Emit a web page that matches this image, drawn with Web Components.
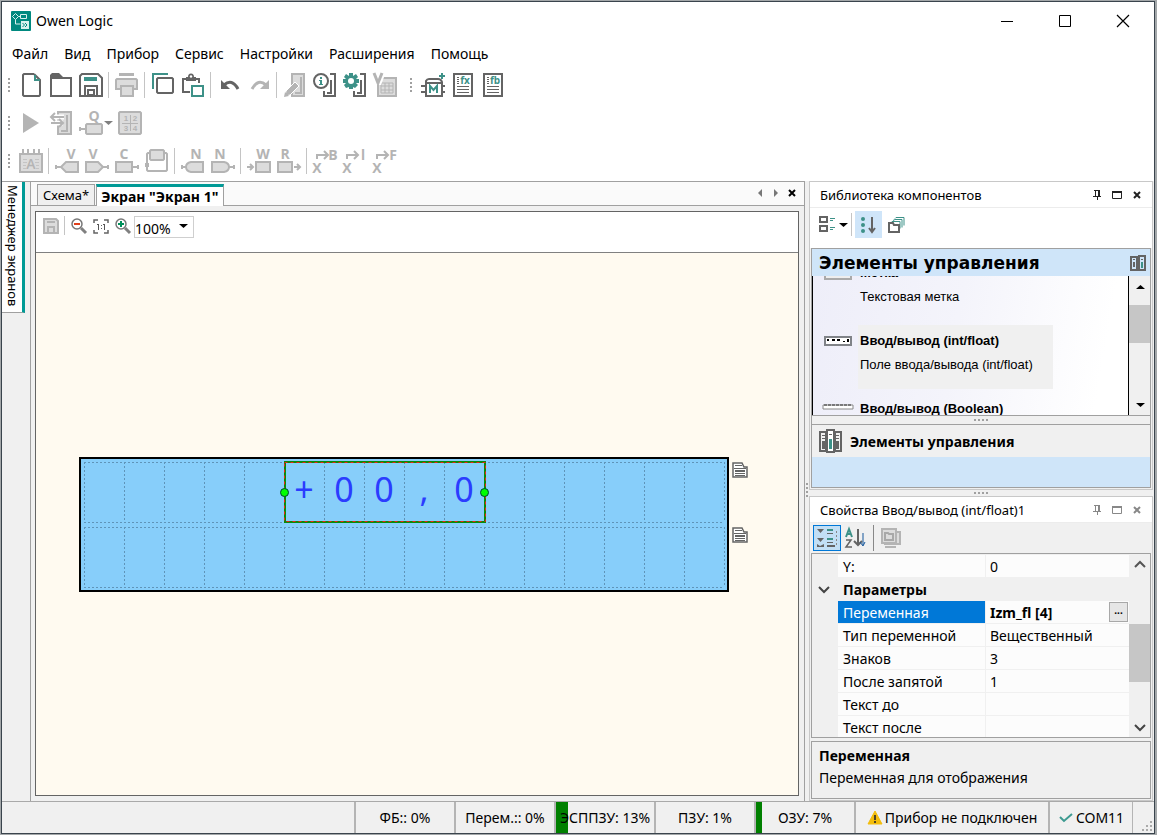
<!DOCTYPE html>
<html lang="ru">
<head>
<meta charset="utf-8">
<title>Owen Logic</title>
<style>
html,body{height:100%;margin:0}
body{background:#a3a7a9;font-family:"Noto Sans","Open Sans",sans-serif;font-size:14px;color:#000;overflow:hidden}
</style>
</head>
<body>
<ol-app></ol-app>
<script>
const ICONS = {
  logo:`<rect width="20" height="20" rx="1" fill="#00897f"/><g fill="none" stroke="#d9f0ee" stroke-width="1"><path d="M1.5 5.5l3-3 3 3-3 3zM7.5 5.5h2M9.5 3.5h6v4h-6zM4.5 8.500v4.500h5"/></g><rect x="10" y="10" width="8" height="8" fill="#d9f0ee"/><path d="M11.500 12l2 2-2 2M14 12l2 2-2 2" fill="none" stroke="#00897f"/>`,
  new:`<path class="d" d="M15 1H5L4 2v20l1 1h15l1-1V7L15 1"/><path class="t" d="M16 2v5h5"/>`,
  open:`<path class="D" d="M1 5V2l2-2h7l4 4v1z"/><path class="d" d="M2 5h20v18H2z"/>`,
  save:`<path class="d" d="M1 3l2-2h16l4 4v18H1z"/><path class="T" d="M5 4h13v4H5z"/><path class="d" d="M6 23V13h12v10M9 22v-5h6v5z"/>`,
  print:`<path class="G" d="M4 0h15v3H4z"/><path class="g" d="M1 16V7l1-1h19l1 1v9z"/><path class="g" d="M6 13h12v10H6z"/>`,
  copy:`<path class="t" d="M2 16V1h15"/><path class="d" d="M7 5h14l1 1v13l-1 1H7l-1-1V6z"/>`,
  paste:`<path class="d" d="M9 19H2V6h16v4"/><path class="D" d="M5 4h2a3 3.500 0 016 0h2v4H5z"/><circle cx="10" cy="3.500" r="1.200" fill="#fff"/><path class="t" d="M11 13h11v10H11z"/>`,
  undo:`<path d="M7 12Q15 5 21 16" fill="none" stroke="#646464" stroke-width="3"/><path class="D" d="M4 7v9h9z"/>`,
  redo:`<path d="M19 12Q11 5 5 16" fill="none" stroke="#b4b4b4" stroke-width="3"/><path class="G" d="M22 7v9h-9z"/>`,
  edit:`<path class="g" d="M9 1h12v22H9z"/><path class="gl" d="M12 20h6V4"/><path d="M2 23l1-5 9-9 4 4-9 9z" fill="#b4b4b4" stroke="#fff"/><path class="G" d="M1 24l1-5 4 4z"/>`,
  info:`<path class="d" d="M17 1h5v22H11v-5M14 20h4V7"/><circle cx="8" cy="8" r="7" fill="#fff" stroke="#646464" stroke-width="2"/><path class="T" d="M7 4h2v2H7zM6 7h3v4h1v1H6v-1h1V8H6z"/>`,
  gear:`<path class="d" d="M17 1h5v22H11v-5M14 20h4V7"/><circle cx="8" cy="8" r="9" fill="#fff"/><path class="T" d="M6 0h4v3l3-2 2 3-2 2h3v4h-3l2 2-3 3-2-1v2H6v-2l-3 1-2-3 2-2H0V6h3L1 4l2-3 3 2z"/><circle cx="8" cy="8" r="3" fill="#fff"/>`,
  vgrid:`<path class="g" d="M5 5h18v18H5z"/><path d="M8 10h12v10H8zM8 13h12M8 17h12M12 10v10M16 10v10" fill="none" stroke="#b4b4b4" stroke-width="1"/><path d="M-1-1h14L8 12H4z" fill="#fff"/><path d="M1 0l4 10L9 0" fill="none" stroke="#b4b4b4" stroke-width="3"/>`,
  macro:`<path class="d" d="M5 11V8q1-2 3-2h9q3 0 4 3v14H5zM5 10h16M0 13h4M0 19h4M21 13h3M21 19h3"/><path class="t" d="M9 20v-7l3.500 4 3.500-4v7M18 3h6M21 0v6"/>`,
  fx:`<path class="d" d="M3 1h18v22H3z"/><path class="d" style="stroke-width:1" d="M6 4.500h2M6 6.500h2M6 8.500h2M6 10.500h2M6 13.500h12M6 16.500h12M6 19.500h12"/><text class="tt" x="14" y="11">fx</text>`,
  fb:`<path class="d" d="M3 1h18v22H3z"/><path class="d" style="stroke-width:1" d="M6 4.500h2M6 6.500h2M6 8.500h2M6 10.500h2M6 13.500h12M6 16.500h12M6 19.500h12"/><text class="tt" x="14" y="11">fb</text>`,
  play:`<path class="G" d="M4 2v20l16-10z"/>`,
  transfer:`<path class="g" d="M9 1h13v22H9z"/><path class="gl" d="M12 20h6V4"/><path d="M4 6h11M3 12h11" stroke="#fff" stroke-width="5"/><path class="gl" d="M3 6h12M6 2L2 6l4 4M2 12h12M10 8l4 4-4 4"/>`,
  q:`<text class="gt" x="15" y="10">Q</text><path class="g" d="M7 14l1-1h14l1 1v8l-1 1H8l-1-1z"/><path class="gl" d="M0 18h6"/><path class="G" d="M0 16h2v4H0z"/>`,
  nums:`<path class="g" d="M2 1h20l1 1v20l-1 1H2l-1-1V2z"/><path d="M4 12.500h16M12.500 4v16" stroke="#b4b4b4" stroke-width="1"/><g class="nt"><text x="8" y="10">1</text><text x="17" y="10">2</text><text x="8" y="20">3</text><text x="17" y="20">4</text></g>`,
  cal:`<path class="g" d="M1 5h22v18H1z"/><path class="gl" d="M4 0v6M9 0v6M15 0v6M20 0v6"/><path d="M4 10.500h4M4 13.500h4M4 16.500h3M4 19.500h3M16 10.500h4M16 13.500h4M17 16.500h3M17 19.500h3" stroke="#c4c4c4"/><text class="gt" x="12" y="20" style="font-weight:600">A</text>`,
  vl:`<text class="gt" x="16" y="10">V</text><path class="g" d="M23 13v10H11l-5-5 5-5z"/><path class="gl" d="M0 18h6"/><path class="G" d="M0 16h2v4H0z"/>`,
  vr:`<text class="gt" x="8" y="10">V</text><path class="g" d="M1 13v10h12l5-5-5-5z"/><path class="gl" d="M18 18h6"/><path class="G" d="M22 16h2v4h-2z"/>`,
  c:`<text class="gt" x="9" y="10">C</text><path class="g" d="M1 13h16v10H1z"/><path class="gl" d="M18 18h6"/><path class="G" d="M22 16h2v4h-2z"/>`,
  loop:`<path class="gl" d="M5 4H3L2 5v16l1 1h18l1-1V5l-1-1h-2"/><path class="g" d="M6 1h12l1 1v8l-1 1H6l-1-1V2z"/><path class="G" d="M0 14h4v4H0z"/>`,
  nl:`<text class="gt" x="15" y="10">N</text><path class="g" d="M22 13v10H10q-5-1-5-5t5-5z"/><path class="gl" d="M0 18h5"/><path class="G" d="M0 16h2v4H0z"/>`,
  nr:`<text class="gt" x="9" y="10">N</text><path class="g" d="M1 13v10h12q5-1 5-5t-5-5z"/><path class="gl" d="M18 18h6"/><path class="G" d="M22 16h2v4h-2z"/>`,
  w:`<text class="gt" x="16" y="10">W</text><path class="g" d="M9 13h14v10H9z"/><path class="gl" d="M0 18h6M3 15l3 3-3 3"/>`,
  r:`<text class="gt" x="8" y="10">R</text><path class="g" d="M1 13h14v10H1z"/><path class="gl" d="M17 18h6M20 15l3 3-3 3"/>`,
  xb:`<path class="gl" d="M4 10V6h11M11 2l4 4-4 4"/><text class="gt" x="4" y="24">X</text><text class="gt" x="20" y="11">B</text>`,
  xi:`<path class="gl" d="M4 10V6h11M11 2l4 4-4 4"/><text class="gt" x="4" y="24">X</text><text class="gt" x="20" y="11" style="font-family:Roboto">I</text>`,
  xf:`<path class="gl" d="M4 10V6h11M11 2l4 4-4 4"/><text class="gt" x="4" y="24">X</text><text class="gt" x="20" y="11">F</text>`,
  saveS:`<path class="g" d="M1 1h12l2 2v12H1z"/><path class="G" d="M4 3h8v2H4z"/><path class="gl" d="M5 15V9h6v6"/>`,
  zoomOut:`<path d="M10 10l5 5" stroke="#808080" stroke-width="3"/><circle cx="6" cy="6" r="5" fill="#fff" stroke="#777" stroke-width="1.500"/><path d="M3 6h6" stroke="#e0401c" stroke-width="2"/>`,
  zoomIn:`<path d="M10 10l5 5" stroke="#808080" stroke-width="3"/><circle cx="6" cy="6" r="5" fill="#fff" stroke="#777" stroke-width="1.500"/><path d="M3 6h6M6 3v6" stroke="#00905a" stroke-width="2"/>`,
  oneone:`<path class="d" style="stroke-width:1.500" d="M1 5V2h4M11 2h4v3M15 12v3h-4M5 15H1v-3"/><path d="M5.500 6v6M4 6.500h1M11.500 6v6M10 6.500h1" stroke="#555" fill="none"/><path class="D" d="M8 7h1v1H8zM8 10h1v1H8z"/>`,
  left:`<path d="M10 4v8L6 8z" fill="#777"/>`,
  right:`<path d="M6 4v8l4-4z" fill="#777"/>`,
  close:`<path d="M5 5l6 6M11 5l-6 6" stroke="currentColor" stroke-width="2"/>`,
  pin:`<path d="M5 3.500h6M6.500 4v5M10.500 4v5M9.500 4v5M4 9.500h8M8.500 9v4" fill="none" stroke="currentColor"/>`,
  win:`<path d="M3.500 4.500h9v7h-9z" fill="none" stroke="currentColor"/><path d="M3 5h10" stroke="currentColor" stroke-width="2"/>`,
  down:`<path d="M4 6h9l-4.500 4z"/>`,
  up:`<path d="M4 10h9L8.500 6z"/>`,
  chevDown:`<path d="M3 6l5 5 5-5" fill="none" stroke="#444" stroke-width="2"/>`,
  chevUp:`<path d="M3 10l5-5 5 5" fill="none" stroke="#555" stroke-width="2"/>`,
  tiles:`<path class="d" d="M1 1h7v5H1zM1 10h7v5H1z"/><path class="t" style="stroke-width:1" d="M11 2.500h5M11 4.500h3M11 11.500h5M11 13.500h3"/>`,
  sort:`<circle class="T" cx="2" cy="2" r="2"/><circle class="T" cx="2" cy="8" r="2"/><circle class="T" cx="2" cy="14" r="2"/><path class="d" d="M11 0v15M8 11l3 4 3-4"/>`,
  folders:`<path d="M5 3.500l2-1h7v8M7 1.500l1-1h8v8M3 5.500l1-1h8v7" fill="none" stroke="#3d9188"/><path class="d" d="M1 6h4l1 2h5v7H1z"/>`,
  books2:`<path class="d" d="M1 2h6v13H1zM9 1h6v14H9z"/><path class="D" d="M3 4h2v1H3zM3 7h2v5H3zM11 4h2v1h-2z"/><path class="T" d="M11 7h2v6h-2z"/>`,
  books3:`<path d="M1 3h6v19H1zM16 3h6v19h-6z" class="d" /><path d="M8 1h7v22H8z" fill="#fff" stroke="#646464" stroke-width="2"/><path class="D" d="M3 6h3v1H3zM3 9h3v1H3zM3 12h3v8H3zM17 6h3v1h-3zM17 9h3v1h-3zM17 12h3v8h-3zM10 5h3v1h-3z"/><path class="T" d="M10 10h3v10h-3z"/>`,
  field:`<path d="M1 1h26v8H1z" fill="#fff" stroke="#808388" stroke-width="2"/><path d="M3 3h2v2H3zM8 3h3v2H8zM13 3h3v2h-3zM19 5h2v1h-2zM23 3h2v3h-2z"/>`,
  bar:`<path d="M0 1h30v4H0z" fill="#fff" stroke="#888" stroke-width="1"/><path d="M1 1h28" stroke="#333" stroke-dasharray="3 1"/>`,
  label:`<path d="M1 1h26v10H1z" fill="#eee" stroke="#aaa" stroke-width="2"/>`,
  cats:`<path class="D" d="M1 1h7L4.500 5zM1 10h7l-3.500 4zM1 19V16l3 2 4-2v3zM11 17h8v2h-8z"/><path class="t" d="M11 2h6M11 11h6"/><path class="d" style="stroke-width:1" d="M11 5.500h6M11 14.500h6"/><path d="M20.500 3v16" stroke="#888" stroke-dasharray="2 2"/>`,
  az:`<path class="t" d="M1 9l3-8 3 8M2 6h4"/><path class="d" style="stroke-width:1.500" d="M1 12h5l-5 7h6"/><path class="d" d="M13 1v16M9 13l4 4 4-4"/><path d="M18 5v12M15 14l3 4 2-4" fill="none" stroke="#15569b"/>`,
  pages:`<path class="g" d="M4 4h15v12H4z"/><path d="M4 19h11" class="gl"/><path class="g" d="M1 1h14v14H1z"/><path d="M4 5h3l1 1h4v6H4z" fill="none" stroke="#a8a8a8" stroke-width="2"/>`,
  doc:`<path d="M2 1h8l2 4h3v10H1V1z" fill="#fff" stroke="#646464" stroke-width="1.500"/><path d="M3 3.500h7M2 6.500h12M3 11.500h10M3 13.500h10" stroke="#646464"/><path d="M3 9h10" stroke="#646464" stroke-width="2"/>`,
  warn:`<path d="M8 1l7 13H1z" fill="#f3bd0b" stroke="#f3bd0b" stroke-linejoin="round"/><path d="M7 5h2v5H7zM7 11h2v2H7z" fill="#4d4327"/>`,
  check:`<path d="M2 7l4 4 8-7" fill="none" stroke="#3d9a90" stroke-width="2"/>`,
  size:`<g fill="#aaa"><path d="M8 0h2v2H8zM4 4h2v2H4zM8 4h2v2H8zM0 8h2v2H0zM4 8h2v2H4zM8 8h2v2H8z"/></g>`,
  wmin:`<path d="M2 8.500h12" stroke="#000"/>`,
  wmax:`<path d="M2.500 2.500h11v11h-11z" fill="none" stroke="#000"/>`,
  wclose:`<path d="M2 2l12 12M14 2L2 14" stroke="#000" stroke-width="1.200"/>`
};

const define = (name, html, ready) => {
  const t = document.createElement('template');
  t.innerHTML = html;
  customElements.define(name, class extends HTMLElement {
    constructor(){ super(); this.attachShadow({mode:'open'}); }
    connectedCallback(){
      if (this.shadowRoot.childNodes.length) return;
      this.shadowRoot.append(t.content.cloneNode(true));
      if (ready) ready(this, this.shadowRoot);
    }
  });
};

/* <ol-icon name w h> : inline vector icon */
define('ol-icon', `<style>
:host{display:inline-flex;flex:none}
svg{display:block;overflow:visible}
.d{fill:none;stroke:#646464;stroke-width:2}.D{fill:#646464}
.t{fill:none;stroke:#3d9188;stroke-width:2}.T{fill:#3d9188}
.g{fill:#dcdcdc;stroke:#b4b4b4;stroke-width:2}.gl{fill:none;stroke:#b4b4b4;stroke-width:2}.G{fill:#b4b4b4}
text{text-anchor:middle;font-family:"Open Sans","Noto Sans",sans-serif;font-weight:700}
.gt{fill:#b4b4b4;font-size:14px}.nt text{fill:#b4b4b4;font-size:8px;font-family:"Liberation Sans",sans-serif}.tt{fill:#3d9188;font-size:10px}
</style>`, (el, root) => {
  const w = el.getAttribute('w') || 16, h = el.getAttribute('h') || w;
  root.innerHTML += `<svg width="${w}" height="${h}" viewBox="0 0 ${w} ${h}" aria-hidden="true">${ICONS[el.getAttribute('name')]}</svg>`;
});

/* <ol-tool icon label> : flat toolbar button */
define('ol-tool', `<style>
:host{display:flex;flex:none;width:var(--tool,30px)}
button{all:unset;box-sizing:border-box;display:flex;align-items:center;justify-content:center;width:100%;height:var(--tool,30px)}
</style><button></button>`, (el, root) => {
  const b = root.querySelector('button');
  b.setAttribute('aria-label', el.getAttribute('label'));
  const s = el.getAttribute('size') || 24;
  b.innerHTML = `<ol-icon name="${el.getAttribute('icon')}" w="${s}" h="${el.getAttribute('h') || s}"></ol-icon>`;
});

define('ol-sep', `<style>:host{display:block;flex:none;width:1px;height:26px;margin:0 3px 0 2px;background:#c4c4c4}</style>`);
define('ol-grip', `<style>:host{display:block;flex:none;width:2px;height:14px;background:repeating-linear-gradient(#a0a0a0 0 2px,transparent 2px 4px)}
:host([dots]){width:15px;height:2px;background:repeating-linear-gradient(90deg,#a0a0a0 0 2px,transparent 2px 4px)}</style>`);

define('ol-titlebar', `<style>
:host{display:flex;align-items:center;height:37px;padding:0 2px 0 9px;background:#fff}
h1{flex:1;margin:0 0 0 5px;font-size:14px;font-weight:400}
.w{display:flex;--tool:58px}
ol-tool{height:30px;align-items:center}
</style><ol-icon name="logo" w="20"></ol-icon><h1>Owen Logic</h1>
<div class="w"><ol-tool icon="wmin" size="16" label="Свернуть"></ol-tool><ol-tool icon="wmax" size="16" label="Развернуть"></ol-tool><ol-tool icon="wclose" size="16" label="Закрыть"></ol-tool></div>`);

define('ol-menubar', `<style>
:host{display:block;height:27px;background:#fff}
nav{display:flex;gap:16px;padding:0 10px;line-height:30px}
button{all:unset;font-size:14px}
</style><nav><button>Файл</button><button>Вид</button><button>Прибор</button><button>Сервис</button><button>Настройки</button><button>Расширения</button><button>Помощь</button></nav>`);

define('ol-toolbars', `<style>
:host{display:block;background:#fff}
div{display:flex;align-items:center;height:38px;padding-left:6px}
ol-grip{margin-right:6px}
.mid{margin-left:10px}
.q{display:flex;align-items:center;width:39px}
.q ol-icon{margin-left:-6px}
</style>
<div><ol-grip></ol-grip><ol-tool icon="new" label="Новый"></ol-tool><ol-tool icon="open" label="Открыть"></ol-tool><ol-tool icon="save" label="Сохранить"></ol-tool><ol-sep></ol-sep><ol-tool icon="print" label="Печать"></ol-tool><ol-sep></ol-sep><ol-tool icon="copy" label="Копировать"></ol-tool><ol-tool icon="paste" label="Вставить"></ol-tool><ol-sep></ol-sep><ol-tool icon="undo" label="Отменить"></ol-tool><ol-tool icon="redo" label="Повторить"></ol-tool><ol-sep></ol-sep><ol-tool icon="edit" label="Записать"></ol-tool><ol-tool icon="info" label="Информация"></ol-tool><ol-tool icon="gear" label="Настройки прибора"></ol-tool><ol-tool icon="vgrid" label="Таблица переменных"></ol-tool><ol-grip class="mid"></ol-grip><ol-tool icon="macro" label="Макрос"></ol-tool><ol-tool icon="fx" label="Функции"></ol-tool><ol-tool icon="fb" label="Блоки"></ol-tool></div>
<div><ol-grip></ol-grip><ol-tool icon="play" label="Пуск"></ol-tool><ol-tool icon="transfer" label="Передача"></ol-tool><span class="q"><ol-tool icon="q" label="Выход"></ol-tool><ol-icon name="down" style="fill:#808080"></ol-icon></span><ol-tool icon="nums" label="Числа"></ol-tool></div>
<div><ol-grip></ol-grip><ol-tool icon="cal" label="Календарь"></ol-tool><ol-sep></ol-sep><ol-tool icon="vl" label="Вход"></ol-tool><ol-tool icon="vr" label="Выход"></ol-tool><ol-tool icon="c" label="Константа"></ol-tool><ol-tool icon="loop" label="Задержка"></ol-tool><ol-sep></ol-sep><ol-tool icon="nl" label="Сетевой вход"></ol-tool><ol-tool icon="nr" label="Сетевой выход"></ol-tool><ol-sep></ol-sep><ol-tool icon="w" label="Запись"></ol-tool><ol-tool icon="r" label="Чтение"></ol-tool><ol-sep></ol-sep><ol-tool icon="xb" label="В Boolean"></ol-tool><ol-tool icon="xi" label="В integer"></ol-tool><ol-tool icon="xf" label="В float"></ol-tool></div>`);

define('ol-side-tab', `<style>
:host{display:block;background:#f0f0f0;border-top:1px solid #a0a0a0}
button{all:unset;box-sizing:border-box;display:block;writing-mode:vertical-rl;width:23px;height:131px;background:#fff;border-right:3px solid #009a96;border-bottom:1px solid #a0a0a0;font-size:13px;line-height:15px;padding-top:3px;white-space:nowrap}
</style><button><slot></slot></button>`);

/* LCD editing surface: 16 x 2 character cells */
define('ol-screen', `<style>
:host{display:flex;align-items:flex-start;gap:3px}
.lcd{position:relative;box-sizing:border-box;width:650px;height:135px;border:2px solid #000;background:#87cefa}
svg{display:block}
.sel{position:absolute;left:203px;top:2px;width:202px;height:62px;display:grid;grid-template-columns:repeat(5,40px);font-size:34px;line-height:56px;color:#2b3cff;text-align:center}
i{position:absolute;top:27px;width:7px;height:7px;border:1px solid #043;border-radius:50%;background:#0f0}
i.a{left:-4px}i.b{right:-3px}
.n{display:flex;flex-direction:column;gap:49px;padding-top:5px}
</style>
<div class="lcd"><svg width="646" height="131"></svg><div class="sel"><span>+</span><span>0</span><span>0</span><span>,</span><span>0</span><i class="a"></i><i class="b"></i></div></div>
<div class="n"><ol-icon name="doc"></ol-icon><ol-icon name="doc"></ol-icon></div>`, (el, root) => {
  let d = '';
  for (const y of [3, 68]) {
    d += `M3 ${y}.5h640M3 ${y + 60}.5h640`;
    for (let i = 0; i <= 16; i++) d += `M${3 + i * 40}.5 ${y}v60`;
  }
  root.querySelector('svg').innerHTML = `<path d="${d}" stroke="#5f94b8" stroke-dasharray="2 2" fill="none"/>
    <path d="M204 3h200v60h-200z" fill="none" stroke="#0a8a0a" stroke-width="2"/><path d="M203.5 3.5h201v59h-201z" fill="none" stroke="#f02010" stroke-width="1" stroke-dasharray="3 3"/>`;
});

define('ol-editor', `<style>
:host{display:flex;flex-direction:column;min-width:0;box-sizing:border-box;border:1px solid #a0a0a0;border-bottom:0;background:#f0f0f0}
.tabs{display:flex;align-items:flex-end;height:24px;padding:0 4px 0 6px;background:#fafafa;box-shadow:inset 0 -1px #a0a0a0}
.tabs button{all:unset;box-sizing:border-box;height:22px;border:1px solid #a0a0a0;padding:0 5px;font-size:13px;line-height:21px;background:#f0f0f0;white-space:nowrap;margin-right:1px}
.tabs button[aria-selected=true]{background:#fff;font-size:14px;font-weight:700;border-top:3px solid #009a96;border-bottom:0;line-height:14px;padding:0 5px 0 4px}
.nav{display:flex;align-items:center;margin-left:auto;height:22px;padding-bottom:2px;--tool:16px}
.frame{flex:1;display:flex;flex-direction:column;margin:5px 5px 5px 4px;border:1px solid #646464;background:#fffaf0;min-height:0}
.bar{display:flex;align-items:flex-start;height:41px;box-sizing:border-box;border-bottom:1px solid #808080;background:#fff;padding:3px 4px 0;--tool:22px}
.bar ol-sep{height:19px;margin:1px 3px 0 2px}
select{appearance:none;display:block;border:1px solid #cfcfcf;width:60px;height:22px;box-sizing:border-box;font:14px "Noto Sans",sans-serif;background:#fff;padding:2px 0 0;margin:0;color:#000}
.z{position:relative;margin-top:1px}
.z ol-icon{position:absolute;right:3px;top:2px;pointer-events:none}
.canvas{flex:1;display:flex;align-items:center;padding-left:43px;min-height:0}
</style>
<div class="tabs" role="tablist"><button role="tab">Схема*</button><button role="tab" aria-selected="true">Экран "Экран 1"</button>
<span class="nav"><ol-tool icon="left" size="16" label="Назад"></ol-tool><ol-tool icon="right" size="16" label="Вперёд"></ol-tool><ol-tool icon="close" size="16" label="Закрыть"></ol-tool></span></div>
<div class="frame"><div class="bar"><ol-tool icon="saveS" size="16" label="Сохранить"></ol-tool><ol-sep></ol-sep><ol-tool icon="zoomOut" size="16" label="Уменьшить"></ol-tool><ol-tool icon="oneone" size="16" label="Масштаб 1:1"></ol-tool><ol-tool icon="zoomIn" size="16" label="Увеличить"></ol-tool><span class="z"><select aria-label="Масштаб"><option>100%</option></select><ol-icon name="down"></ol-icon></span></div>
<div class="canvas"><ol-screen></ol-screen></div></div>`);

define('ol-panel', `<style>
:host{display:flex;flex-direction:column;box-sizing:border-box;border:1px solid #c8c8c8;background:#f0f0f0;color:#000}
header{display:flex;align-items:center;flex:none;height:25px;padding:0 5px 0 10px;background:#fff;border-bottom:1px solid #ececec;--tool:20px}
h2{flex:1;margin:0;font-size:13px;font-weight:400;white-space:nowrap}
.c{display:flex;color:#222}
:host([inactive]) .c{color:#888}
</style><header><h2></h2><span class="c"><ol-tool icon="pin" size="16" label="Закрепить"></ol-tool><ol-tool icon="win" size="16" label="Развернуть"></ol-tool><ol-tool icon="close" size="16" label="Закрыть"></ol-tool></span></header><slot></slot>`,
(el, root) => { root.querySelector('h2').textContent = el.getAttribute('heading'); });

define('ol-scroll', `<style>
:host{display:flex;flex-direction:column;align-items:center;flex:none;width:21px;background:#f0f0f0;box-sizing:border-box}
ol-tool{--tool:21px}
b{display:block;width:100%;background:#c6c6c6}
</style><ol-tool size="16" label="Вверх"></ol-tool><span></span><b></b><span style="flex:1"></span><ol-tool size="16" label="Вниз"></ol-tool>`,
(el, root) => {
  const [a, z] = root.querySelectorAll('ol-tool');
  const thin = el.hasAttribute('thin');
  a.shadowRoot.querySelector('button').innerHTML = `<ol-icon name="${thin ? 'chevUp' : 'up'}"></ol-icon>`;
  z.shadowRoot.querySelector('button').innerHTML = `<ol-icon name="${thin ? 'chevDown' : 'down'}"></ol-icon>`;
  root.querySelector('span').style.height = el.getAttribute('offset') + 'px';
  root.querySelector('b').style.height = el.getAttribute('thumb') + 'px';
});

define('ol-lib-item', `<style>
:host{display:flex;flex:none;height:64px;font-family:"Liberation Sans",Arial,sans-serif;font-size:13px}
.i{flex:none;width:45px;display:flex;justify-content:center;padding:11px 0 0 5px;box-sizing:border-box;height:30px}
.b{padding:8px 20px 0 2px;line-height:16px;white-space:nowrap}
:host([hot]) .b{background:#f0f0f0}
strong{display:block;margin-bottom:8px}
</style><span class="i"></span><div class="b"><strong></strong><span><slot></slot></span></div>`, (el, root) => {
  root.querySelector('strong').textContent = el.getAttribute('name');
  const [n, w, h] = el.getAttribute('icon').split(' ');
  root.querySelector('.i').innerHTML = `<ol-icon name="${n}" w="${w}" h="${h}"></ol-icon>`;
});

define('ol-library', `<style>
:host{display:flex;flex-direction:column;flex:1;min-height:0;background:#f0f0f0}
.bar{display:flex;align-items:center;flex:none;height:40px;background:#fff;padding:0 9px 7px;box-sizing:border-box;--tool:27px}
.bar ol-sep{margin:0 3px 0 0;height:23px}
.on{background:#cfe5f9}
.dd{margin-left:-1px}
.box{flex:1;display:flex;flex-direction:column;border:1px solid #a0a0a0;margin:0 1px 1px;min-height:0}
h3{display:flex;align-items:center;justify-content:space-between;flex:none;margin:0;height:27px;padding:0 4px 0 7px;background:#cfe5f9;font:bold 17px "DejaVu Sans",Verdana,sans-serif}
.list{display:flex;flex:none;height:139px;background:#fff;overflow:hidden}
.items{flex:1;border:solid #000;border-width:0 1px;background:linear-gradient(100deg,#eeeef9 0,#f4f4fb 45%,#fff 90%);display:flex;flex-direction:column;gap:4px}
.items :first-child{margin-top:-19px}
.split{display:flex;flex:none;justify-content:center;padding-top:3px;height:5px;border:solid #a0a0a0;border-width:1px 0}
.sec{display:flex;flex:none;align-items:center;gap:8px;height:32px;padding-left:7px}
.sec b{font-size:14px}
.fill{flex:1;background:#cfe5f9}
</style>
<div class="bar"><ol-icon name="tiles" w="17"></ol-icon><ol-icon class="dd" name="down"></ol-icon><ol-sep></ol-sep><ol-tool class="on" icon="sort" size="16" label="По порядку"></ol-tool><ol-tool icon="folders" size="16" label="Группы"></ol-tool></div>
<div class="box"><h3>Элементы управления<ol-icon name="books2"></ol-icon></h3>
<div class="list"><div class="items"><ol-lib-item name="Метка" icon="label 28 12">Текстовая метка</ol-lib-item><ol-lib-item hot name="Ввод/вывод (int/float)" icon="field 28 10">Поле ввода/вывода (int/float)</ol-lib-item><ol-lib-item name="Ввод/вывод (Boolean)" icon="bar 30 6"></ol-lib-item></div><ol-scroll offset="8" thumb="38"></ol-scroll></div>
<div class="split"><ol-grip dots></ol-grip></div>
<div class="sec"><ol-icon name="books3" w="23" h="24"></ol-icon><b>Элементы управления</b></div><div class="fill"></div></div>`);

define('ol-props', `<style>
:host{display:flex;flex-direction:column;flex:1;min-height:0}
.bar{display:flex;align-items:center;flex:none;height:30px;padding:0 3px;--tool:28px}
.bar ol-sep{background:#888;margin:0 3px 0 4px}
.on{background:#c2dff5;outline:1px solid #0078d7;outline-offset:-1px;height:26px;align-items:center;overflow:hidden}
.grid{display:flex;flex:none;height:183px;margin:0 1px;border:1px solid #a0a0a0;overflow:hidden}
.gut{flex:none;width:26px;box-sizing:border-box;padding:27px 0 0 4px}
.tw{flex:1;overflow:hidden}
table{width:100%;border-collapse:separate;border-spacing:0;table-layout:fixed;font-size:14px;line-height:21px;margin-top:1px}
th,td{text-align:left;font-weight:400;height:21px;padding:1px 5px 0;background:#fcfcfc;border-bottom:1px solid #f0f0f0;white-space:nowrap}
col.n{width:147px}
td{border-left:1px solid #f0f0f0;padding-left:4px}
tr.h th{font-weight:700;background:#f0f0f0}
tr.s th{background:#0078d7;color:#fff}
tr.s td{font-weight:700}
.v{display:flex;justify-content:space-between;margin-right:-4px}
.v button{box-sizing:border-box;width:19px;height:20px;padding:0 0 4px;border:1px solid #a8a8a8;background:#e6e6e6;font:bold 10px/10px "Noto Sans",sans-serif}
.desc{flex:1;margin:3px 1px 1px;border:1px solid #a0a0a0;padding:3px 7px;line-height:22px}
.desc b{display:block}
</style>
<div class="bar"><ol-tool class="on" icon="cats" size="22" h="20" label="По категориям"></ol-tool><ol-tool icon="az" size="20" label="По алфавиту"></ol-tool><ol-sep></ol-sep><ol-tool icon="pages" size="20" label="Страницы свойств"></ol-tool></div>
<div class="grid"><div class="gut"><ol-icon name="chevDown"></ol-icon></div><div class="tw"><table><colgroup><col class="n"><col></colgroup>
<tr><th scope="row">Y:</th><td>0</td></tr><tr class="h"><th colspan="2">Параметры</th></tr>
<tr class="s"><th scope="row">Переменная</th><td><div class="v">Izm_fl [4]<button aria-label="Выбрать">...</button></div></td></tr>
<tr><th scope="row">Тип переменной</th><td>Вещественный</td></tr><tr><th scope="row">Знаков</th><td>3</td></tr><tr><th scope="row">После запятой</th><td>1</td></tr><tr><th scope="row">Текст до</th><td></td></tr><tr><th scope="row">Текст после</th><td></td></tr></table></div><ol-scroll thin offset="49" thumb="58"></ol-scroll></div>
<div class="desc"><b>Переменная</b>Переменная для отображения</div>`);

define('ol-cell', `<style>
:host{display:flex;align-items:center;justify-content:center;position:relative;box-sizing:border-box;border-left:2px solid #b4b4b4;white-space:nowrap}
i{position:absolute;left:0;top:0;bottom:0;background:green}
span{position:relative;display:flex;align-items:center;gap:2px}
</style><i></i><span><slot></slot></span>`, (el, root) => { root.querySelector('i').style.width = (el.getAttribute('value') || 0) + '%'; });

define('ol-status', `<style>
:host{display:grid;flex:none;grid-template-columns:1fr repeat(5,100px) 194px 84px 22px;height:31px;border-top:1px solid #a9a9a9;background:#f0f0f0}
.g{display:flex;align-items:flex-end;justify-content:flex-end;padding:2px;border-left:1px solid #b4b4b4}
</style><span></span><ol-cell>ФБ:: 0%</ol-cell><ol-cell>Перем.:: 0%</ol-cell><ol-cell value="12">ЭСППЗУ: 13%</ol-cell><ol-cell>ПЗУ: 1%</ol-cell><ol-cell value="6">ОЗУ: 7%</ol-cell><ol-cell><ol-icon name="warn"></ol-icon>Прибор не подключен</ol-cell><ol-cell><ol-icon name="check"></ol-icon>COM11</ol-cell><span class="g"><ol-icon name="size" w="10"></ol-icon></span>`);

define('ol-app', `<style>
:host{display:flex;flex-direction:column;box-sizing:border-box;height:100vh;padding:1px 2px 1px 1px}
.win{flex:1;display:flex;flex-direction:column;border:1px solid #3a444d;background:#fff;min-height:0}
main{flex:1;display:grid;grid-template-columns:28px minmax(0,1fr) 4px 345px;background:#f0f0f0;min-height:0;margin-top:1px}
.right{display:flex;flex-direction:column;min-height:0;padding-right:1px}
.vs{display:flex;align-items:flex-end;justify-content:center;box-sizing:border-box;padding-bottom:304px}
.hs{display:flex;flex:none;justify-content:center;height:6px;align-items:center}
.lib{flex:1;min-height:0}
.pr{flex:none;height:305px}
</style>
<div class="win"><ol-titlebar></ol-titlebar><ol-menubar></ol-menubar><ol-toolbars></ol-toolbars>
<main><ol-side-tab>Менеджер экранов</ol-side-tab><ol-editor></ol-editor><div class="vs"><ol-grip></ol-grip></div>
<div class="right"><ol-panel class="lib" heading="Библиотека компонентов"><ol-library></ol-library></ol-panel><div class="hs"><ol-grip dots></ol-grip></div><ol-panel class="pr" inactive heading="Свойства Ввод/вывод (int/float)1"><ol-props></ol-props></ol-panel></div></main>
<ol-status></ol-status></div>`);
</script>
</body>
</html>
